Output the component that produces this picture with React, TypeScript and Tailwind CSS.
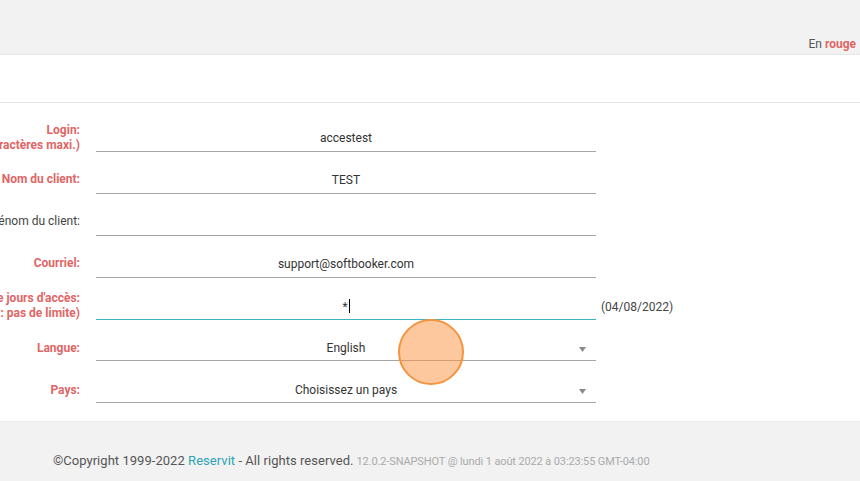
import React from 'react';

const red = 'text-[#e06666]';

type Row = {
  label: string;
  sub?: string;
  required?: boolean;
  value: string;
  select?: boolean;
  focused?: boolean;
  after?: string;
  caret?: boolean;
  tight?: boolean;
};

const rows: Row[] = [
  { label: 'Login:', sub: '(8 caractères maxi.)', required: true, value: 'accestest' },
  { label: 'Nom du client:', required: true, value: 'TEST' },
  { label: 'Prénom du client:', value: '' },
  { label: 'Courriel:', required: true, value: 'support@softbooker.com' },
  {
    label: "Nombre de jours d'accès:",
    sub: '(*: pas de limite)',
    required: true,
    value: '*',
    focused: true,
    caret: true,
    after: '(04/08/2022)',
  },
  { label: 'Langue:', required: true, value: 'English', select: true, tight: true },
  { label: 'Pays:', required: true, value: 'Choisissez un pays', select: true },
];

function FieldRow({ row }: { row: Row }) {
  return (
    <div className={`flex items-end ${row.tight ? 'h-[41px]' : 'h-[42px]'}`}>
      <div
        className={`flex w-[80px] shrink-0 items-center justify-end ${row.select ? 'h-[26px]' : 'h-[29px]'}`}
      >
        <div
          className={`shrink-0 whitespace-nowrap text-right text-[12px] leading-[15px] ${
            row.required ? `font-bold ${red}` : 'text-[#444]'
          }`}
        >
          <div>{row.label}</div>
          {row.sub && <div>{row.sub}</div>}
        </div>
      </div>
      <div
        className={`relative ml-[16px] flex h-[30px] w-[500px] shrink-0 items-center justify-center border-b ${
          row.select ? 'pt-[5px]' : 'pt-[3px]'
        } ${row.focused ? 'border-[#3bb3c3]' : 'border-[#a6a6a6]'}`}
      >
        <span className="text-[12px] text-[#333]">
          {row.value}
          {row.caret && <span className="ml-[1px] inline-block h-[14px] w-px translate-y-[2px] bg-black" />}
        </span>
        {row.select && (
          <svg className="absolute right-[10px] top-[16px]" width="7" height="5" viewBox="0 0 7 5">
            <path d="M0 0 L7 0 L3.5 5 Z" fill="#8a8a8a" />
          </svg>
        )}
      </div>
      {row.after && (
        <div className="ml-[5px] h-[30px] pt-[8px] text-[12px] text-[#444] whitespace-nowrap">{row.after}</div>
      )}
    </div>
  );
}

export default function App() {
  return (
    <div
      className="relative h-[481px] w-[860px] overflow-hidden bg-white"
      style={{ fontFamily: 'Roboto, "Noto Sans", sans-serif' }}
    >
      {/* top bar */}
      <div className="flex h-[55px] items-end justify-end border-b border-[#e6e6e6] bg-[#f2f2f2] pr-[4px]">
        <div className="pb-[1px] text-[12px] whitespace-nowrap text-[#555]">
          En <span className={`font-bold ${red}`}>rouge</span>
        </div>
      </div>

      {/* title band */}
      <div className="h-[48px] border-b border-[#e6e6e6]" />

      {/* form */}
      <div className="pt-[7px]">
        {rows.map((r) => (
          <FieldRow key={r.label} row={r} />
        ))}
      </div>

      {/* footer */}
      <div className="absolute bottom-0 left-0 right-0 h-[60px] border-t border-[#ebebeb] bg-[#f2f2f2]">
        <div className="flex items-baseline pl-[53px] pt-[29px] whitespace-nowrap">
          <span className="text-[13px] tracking-[0.04px] text-[#555]">
            ©Copyright 1999-2022 <span className="text-[#2aa3b5]">Reservit</span> - All rights reserved.
          </span>
          <span className="ml-[3px] text-[11px] tracking-[-0.12px] text-[#aaa]">
            12.0.2-SNAPSHOT @ lundi 1 août 2022 à 03:23:55 GMT-04:00
          </span>
        </div>
      </div>

      {/* pointer indicator */}
      <div className="absolute left-[398px] top-[319px] h-[66px] w-[66px] rounded-full border-2 border-[#f3953f] bg-[#fb923c]/50" />
    </div>
  );
}
